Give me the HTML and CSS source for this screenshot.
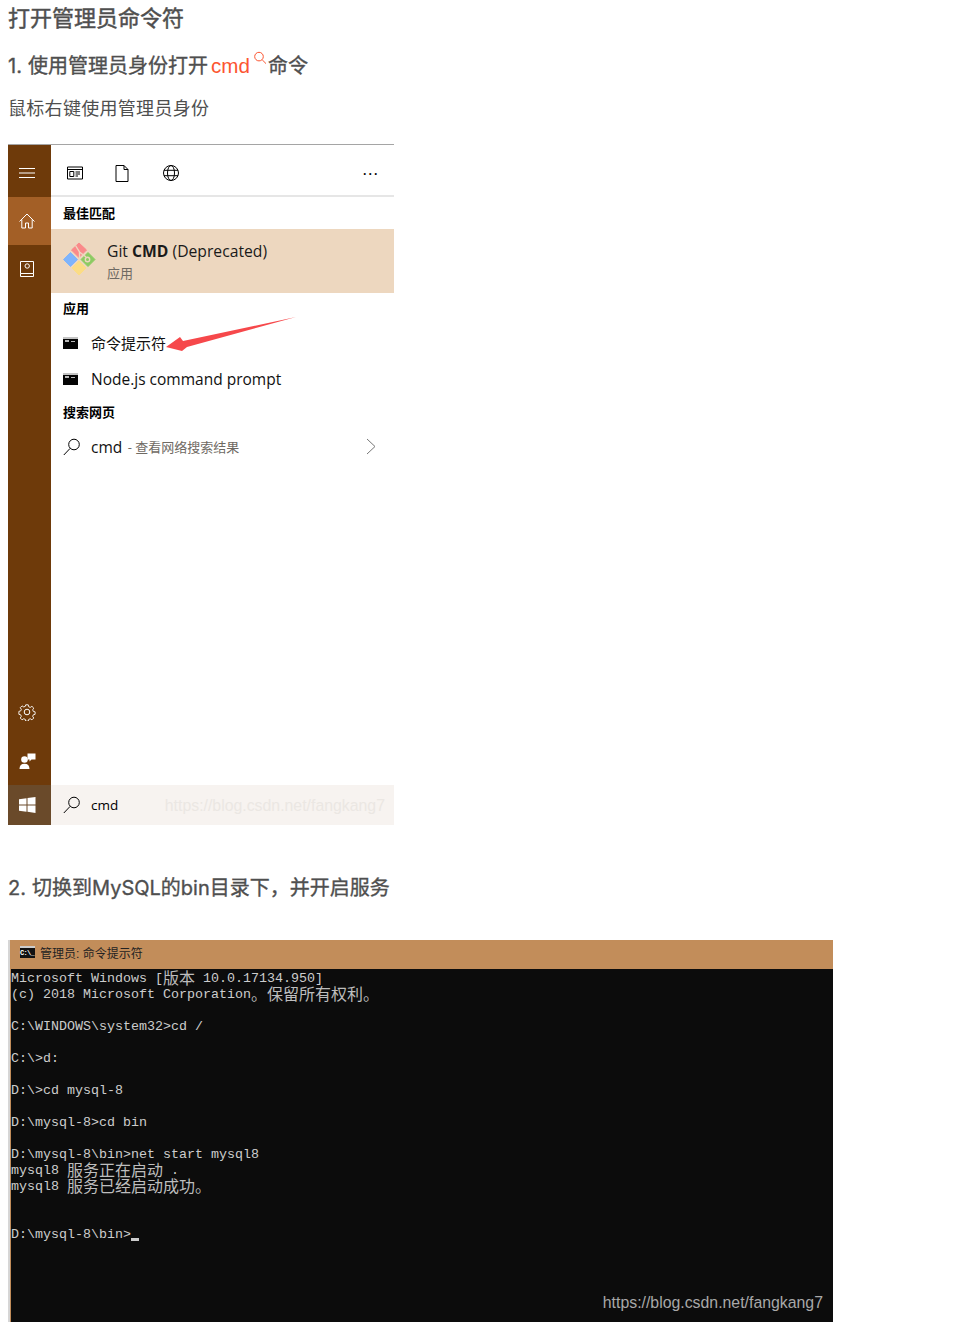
FILE: index.html
```html
<!DOCTYPE html>
<html lang="zh-CN">
<head>
<meta charset="utf-8">
<title>打开管理员命令符</title>
<link rel="stylesheet" href="styles.css">
</head>
<body>
<h2 class="title">打开管理员命令符</h2>
<h3 class="step step-one"><span class="num">1.</span><span>使用管理员身份打开</span><a class="keyword">cmd<svg class="kw-icon" width="14" height="14" viewBox="0 0 14 14"><circle cx="6" cy="5.6" r="4.3"/><path d="M9.2 8.8 13 12.6"/></svg></a><span>命令</span></h3>
<p class="intro">鼠标右键使用管理员身份</p>

<div class="win">
  <aside class="win-side">
    <div class="side-item side-menu"><svg width="18" height="18" viewBox="0 0 18 18"><path d="M1 4.500h16M1 9h16M1 13.500h16"/></svg></div>
    <div class="side-item side-home"><svg width="18" height="18" viewBox="0 0 18 18"><path d="M1.500 9.500 9 2l7.500 7.500M3.800 7.500V16h3.700v-5h3v5h3.700V7.500"/></svg></div>
    <div class="side-item side-book"><svg width="18" height="18" viewBox="0 0 18 18"><path d="M2.500 1.500h13v12h-13zM2.500 13.500v3h13v-3"/><circle cx="9.200" cy="6" r="2.200"/></svg></div>
    <div class="side-spacer"></div>
    <div class="side-item side-gear"><svg width="18" height="18" viewBox="0 0 18 18"><circle cx="9" cy="9" r="2.800"/><path d="M7.600 1h2.800l.5 2.200 1.700.7 1.900-1.200 2 2-1.200 1.900.7 1.700 2 .5v2.800l-2 .5-.7 1.700 1.200 1.900-2 2-1.900-1.200-1.700.7-.5 2H7.600l-.5-2-1.700-.7-1.900 1.200-2-2 1.200-1.900-.7-1.700-2-.5V8.300l2-.5.7-1.700-1.200-1.900 2-2 1.900 1.200 1.700-.7z" transform="translate(.9 .9) scale(.9)"/></svg></div>
    <div class="side-item side-user"><svg width="18" height="18" viewBox="0 0 18 18"><circle class="solid" cx="6.500" cy="7.500" r="3.300"/><path class="solid" d="M1.500 17c0-3.500 1.800-5.200 5-5.200s5 1.700 5 5.200zM9.500 1.500h8v6h-4l-2 2V7.500h-2z"/></svg></div>
    <div class="side-item side-start"><svg width="18" height="16" viewBox="0 0 18 16"><path class="solid" d="M0 2.300 7.500 1.200v6.200H0zM8.500 1 16.500 0v7.400h-8zM0 8.500h7.500v6.300L0 13.700zM8.500 8.500h8V16l-8-1.300z"/></svg></div>
  </aside>
  <div class="win-main">
    <div class="toolbar">
      <svg class="tool" width="16" height="14" viewBox="0 0 16 14"><path d="M.5 1h15v12H.5zM.5 3.500h15M2.800 5.500h4v5h-4zM8.500 6h4.500M8.500 8h4.500M8.500 10H11"/></svg>
      <svg class="tool tool-doc" width="14" height="17" viewBox="0 0 14 17"><path d="M1 .5h8l4 4v12H1zM9 .5v4h4"/></svg>
      <svg class="tool tool-web" width="18" height="18" viewBox="0 0 18 18"><circle cx="9" cy="9" r="7.500"/><ellipse cx="9" cy="9" rx="3.500" ry="7.500"/><path d="M2 6.300h14M2 11.700h14"/></svg>
      <span class="tool-more">···</span>
    </div>
    <div class="sec-label sec-best">最佳匹配</div>
    <div class="best-row">
      <svg class="git-logo" width="34" height="34" viewBox="0 0 34 34">
        <path fill="#fa8a8a" stroke="#fa8a8a" stroke-linejoin="round" d="M17 1 24.500 8 17 15.500 9.500 8z"/>
        <path fill="#7fb4fb" stroke="#7fb4fb" stroke-linejoin="round" d="M8.500 10.500 15.500 17.500 8.500 24.500 1.500 17.500z"/>
        <path fill="#8ccb62" stroke="#8ccb62" stroke-linejoin="round" d="M26 10.500 33 17.500 26 24.500 19 17.500z"/>
        <path fill="#fbdc85" stroke="#fbdc85" stroke-linejoin="round" d="M17 19 24 26 17 33 10 26z"/>
        <path class="git-cut" d="M13.500 3.500 17.500 10 17.500 19M17.500 10 24 15"/>
        <circle class="git-cut" cx="25.500" cy="17.500" r="2.200"/>
      </svg>
      <div class="best-text">
        <div class="best-name">Git <b>CMD</b> (Deprecated)</div>
        <div class="best-sub">应用</div>
      </div>
    </div>
    <div class="sec-label sec-apps">应用</div>
    <div class="app-row app-first"><span class="console-ico"><i></i><i class="dash"></i></span><span class="app-zh">命令提示符</span></div>
    <div class="app-row app-second"><span class="console-ico"><i></i><i class="dash"></i></span><span class="app-name">Node.js command prompt</span></div>
    <div class="sec-label sec-web">搜索网页</div>
    <div class="web-row">
      <svg class="search" width="18" height="18" viewBox="0 0 18 18"><circle cx="11" cy="6.500" r="5.300"/><path d="M7.200 10.300.8 17"/></svg>
      <span class="app-name">cmd</span><span class="web-hint"> - 查看网络搜索结果</span>
      <svg class="chev" width="10" height="17" viewBox="0 0 10 17"><path d="M1 1l8 7.500L1 16"/></svg>
    </div>
    <div class="main-spacer"></div>
    <div class="search-bar">
      <svg class="search" width="18" height="18" viewBox="0 0 18 18"><circle cx="11" cy="6.500" r="5.300"/><path d="M7.200 10.300.8 17"/></svg>
      <span class="search-text">cmd</span>
      <span class="mark-light">https://blog.csdn.net/fangkang7</span>
    </div>
  </div>
  <svg class="arrow" width="132" height="38" viewBox="0 0 132 38"><path fill="#f6484b" d="M1 31 15 21 18 25 131 1 22 31 17 35z"/></svg>
</div>

<h3 class="step step-two"><span class="num">2.</span><span>切换到MySQL的bin目录下，并开启服务</span></h3>

<div class="cmd">
  <div class="cmd-title">
    <span class="cmd-ico">C:\_</span><span>管理员: 命令提示符</span>
  </div>
  <div class="cmd-body">
    <div class="ln"><span>Microsoft Windows [</span><span class="zh">版本</span><span> 10.0.17134.950]</span></div>
    <div class="ln"><span>(c) 2018 Microsoft Corporation</span><span class="zh">。保留所有权利。</span></div>
    <div class="ln"></div>
    <div class="ln">C:\WINDOWS\system32&gt;cd /</div>
    <div class="ln"></div>
    <div class="ln">C:\&gt;d:</div>
    <div class="ln"></div>
    <div class="ln">D:\&gt;cd mysql-8</div>
    <div class="ln"></div>
    <div class="ln">D:\mysql-8&gt;cd bin</div>
    <div class="ln"></div>
    <div class="ln">D:\mysql-8\bin&gt;net start mysql8</div>
    <div class="ln"><span>mysql8 </span><span class="zh">服务正在启动</span><span> .</span></div>
    <div class="ln"><span>mysql8 </span><span class="zh">服务已经启动成功。</span></div>
    <div class="ln"></div>
    <div class="ln"></div>
    <div class="ln"><span>D:\mysql-8\bin&gt;</span><span class="cursor"></span></div>
    <div class="mark-dark">https://blog.csdn.net/fangkang7</div>
  </div>
</div>
</body>
</html>
```
FILE: styles.css
```css
* { box-sizing: border-box; }
html, body { margin: 0; padding: 0; background: #fff; }
body {
  width: 980px;
  height: 1326px;
  padding-left: 8px;
  overflow: hidden;
  font-family: "Liberation Sans", "Noto Sans CJK SC", sans-serif;
  color: #4f4f4f;
}
.title { margin: 0; font-size: 22px; line-height: 37px; font-weight: 400; -webkit-text-stroke: .45px #4f4f4f; }
.step { margin: 0; font-size: 20px; line-height: 30px; font-weight: 400; -webkit-text-stroke: .35px #4f4f4f; font-family: "Inter", "Noto Sans CJK SC", sans-serif; display: flex; height: 30px; white-space: pre; }
.num { width: 20px; }
.step-one { margin-top: 14px; align-items: center; }
.step-two .num { width: 24px; }
.keyword { color: #fc5531; -webkit-text-stroke: 0; font-family: "Liberation Sans", sans-serif; font-weight: 400; font-size: 20.600px; position: relative; padding-right: 18px; margin-left: 3px; }
.kw-icon { position: absolute; right: 1px; top: 0; fill: none; stroke: #fc5531; stroke-width: 1; }
.intro { margin: 13px 0 0; font-size: 18px; letter-spacing: .3px; line-height: 30px; }

.win {
  margin-top: 20px;
  width: 386px;
  height: 681px;
  display: flex;
  position: relative;
  border-top: 1px solid #a5a5a5;
  font-family: "Open Sans", "Noto Sans CJK SC", sans-serif;
  color: #000;
}
.win-side { width: 43px; background: #6e3a0a; display: flex; flex-direction: column; }
.side-item { width: 43px; display: flex; align-items: center; padding-left: 10px; }
.side-item svg { fill: none; stroke: #fff; stroke-width: 1; }
.side-item svg .solid { fill: #fff; stroke: none; }
.side-menu { height: 52px; padding-top: 4px; }
.side-home { height: 48px; background: #a35f26; }
.side-book { height: 47px; padding-top: 1px; }
.side-spacer { flex: 1; }
.side-gear { height: 48px; padding-bottom: 4px; }
.side-user { height: 47px; padding-bottom: 2px; }
.side-start { height: 40px; background: #6a4a2a; padding-left: 11px; }

.win-main { flex: 1; display: flex; flex-direction: column; background: #fff; }
.toolbar { height: 52px; display: flex; align-items: center; padding: 6px 15px 0 16px; border-bottom: 2px solid #e6e6e6; }
.tool { fill: none; stroke: #000; stroke-width: 1; flex: none; }
.tool-doc { margin-left: 32px; }
.tool-web { margin-left: 33px; }
.tool-more { margin-left: auto; font-size: 17px; letter-spacing: 1px; }
.sec-label { padding-left: 12px; font-size: 13px; font-weight: 700; height: 32px; line-height: 32px; }
.best-row { height: 64px; background: #edd7bf; display: flex; align-items: center; padding-left: 11px; }
.git-logo { flex: none; margin-bottom: 4px; }
.git-cut { fill: none; stroke: #edd7bf; stroke-width: 1.400; }
.best-text { margin-left: 11px; }
.best-name { font-size: 15.700px; line-height: 22px; color: #1a1a1a; }
.best-sub { font-size: 13px; line-height: 20px; color: #6f6a63; margin-top: 1px; }
.sec-apps { height: 33px; line-height: 31px; }
.app-row { height: 36px; display: flex; align-items: center; padding-left: 12px; }
.app-first { height: 34px; padding-bottom: 1px; }
.app-second { height: 37px; }
.console-ico { width: 15px; height: 12px; background: #050505; border-top: 2px solid #c4c4c4; margin-right: 13px; position: relative; flex: none; }
.console-ico i { position: absolute; left: 2px; top: 1px; width: 4px; height: 2px; background: #bbb; }
.console-ico .dash { left: 8px; top: 2px; width: 4px; height: 1px; }
.app-name { font-size: 15.500px; color: #111; }
.app-zh { font-size: 15px; color: #111; }
.sec-web { height: 33px; line-height: 31px; }
.web-row { height: 36px; display: flex; align-items: center; padding: 0 0 3px 12px; white-space: pre; position: relative; }
.search { flex: none; fill: none; stroke: #000; stroke-width: 1; margin-right: 10px; }
.web-hint { font-size: 13px; color: #6f6a63; margin-left: 2px; }
.chev { position: absolute; left: 315px; top: 8px; fill: none; stroke: #777; stroke-width: 1; }
.main-spacer { flex: 1; }
.search-bar { height: 40px; background: #f7f3f0; display: flex; align-items: center; padding-left: 12px; position: relative; }
.search-text { font-size: 13.500px; color: #000; }
.mark-light { position: absolute; right: 9px; top: 11px; font: 15.850px/20px "Liberation Sans", sans-serif; color: #ebe7e3; }
.arrow { position: absolute; left: 157px; top: 171px; }

.step-two { margin-top: 48px; }
.cmd { margin-top: 37px; width: 825px; height: 382px; border-left: 2px solid #d6d6d6; position: relative; }
.cmd-title {
  height: 29px;
  background: #c28d5a;
  display: flex;
  align-items: center;
  padding: 0 0 5px 10px;
  font-size: 12px;
  color: #222;
}
.cmd-ico { width: 15px; height: 12px; margin-right: 5px; background: #111; color: #fff; font: 700 7px/10px "Liberation Mono", monospace; letter-spacing: -.7px; border-top: 2px solid #ccc; }
.cmd-body {
  height: 353px;
  padding-top: 2px;
  background: #0c0c0c;
  border-left: 1px solid #c28d5a;
  color: #ccc;
  font-family: "Liberation Mono", "Noto Sans CJK SC", monospace;
  font-size: 13.330px;
  position: relative;
}
.ln { height: 16px; line-height: 16px; white-space: pre; display: flex; align-items: flex-start; }
.zh { font-family: "Noto Sans CJK SC", sans-serif; font-size: 16px; line-height: 14px; color: #bdbdbd; margin-top: -1px; }
.cursor { width: 8px; height: 3px; background: #ccc; margin-top: 11px; }
.mark-dark { position: absolute; right: 10px; bottom: 9px; font: 15.850px/20px "Liberation Sans", sans-serif; color: #a8a8a8; }
```
